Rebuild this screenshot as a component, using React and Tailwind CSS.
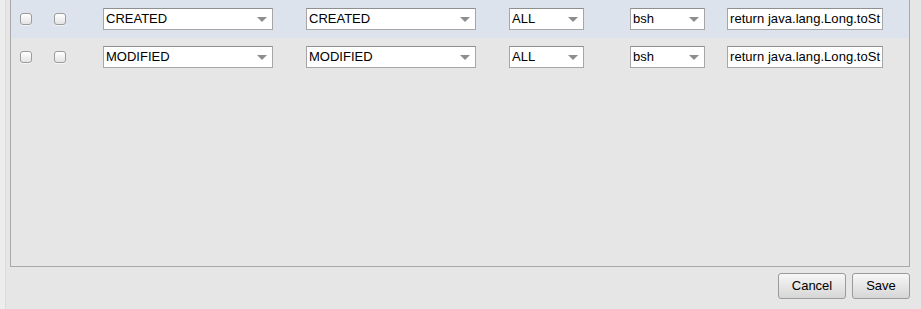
import React from 'react'

const ROWS = [
  { a: 'CREATED', b: 'CREATED', highlight: true },
  { a: 'MODIFIED', b: 'MODIFIED', highlight: false },
]

const Check = ({ className = '' }) => (
  <span
    className={`block w-[12px] h-[12px] rounded-[3px] border border-[#9c9c9c] bg-gradient-to-b from-white to-[#e4e4e4] shadow-[0_1px_0_rgba(255,255,255,0.6)] ${className}`}
  />
)

const Select = ({ value, width, className = '' }) => (
  <div
    className={`relative h-[22px] bg-white border border-[#a6a6a6] border-t-[#8f8f8f] flex items-center pl-[2px] pb-[2px] text-[13px] text-black leading-none ${width} ${className}`}
  >
    <span>{value}</span>
    <span className="absolute right-[5px] top-[8px] w-0 h-0 border-l-[5px] border-r-[5px] border-t-[5px] border-l-transparent border-r-transparent border-t-[#8e8e8e]" />
  </div>
)

export default function App() {
  return (
    <div
      className="w-[921px] h-[309px] bg-[#e6e6e6] flex overflow-hidden"
      style={{ fontFamily: '"Liberation Sans", Arial, sans-serif' }}
    >
      <div className="w-[6px] h-full bg-[#ededed] border-r border-[#dcdcdc]" />
      <div className="flex-1 flex flex-col pl-[4px] pr-[11px]">
        <div className="h-[267px] border-x border-b border-[#a9a9a9] flex flex-col">
          {ROWS.map((r, i) => (
            <div
              key={i}
              className={`h-[38px] flex items-center ${r.highlight ? 'bg-[#dce3ec]' : ''}`}
            >
              <Check className="ml-[9px]" />
              <Check className="ml-[22px]" />
              <Select value={r.a} width="w-[170px]" className="ml-[37px]" />
              <Select value={r.b} width="w-[170px]" className="ml-[33px]" />
              <Select value="ALL" width="w-[75px]" className="ml-[33px]" />
              <Select value="bsh" width="w-[75px]" className="ml-[46px]" />
              <div className="ml-[22px] w-[156px] h-[22px] bg-white border border-[#a6a6a6] border-t-[#8f8f8f] flex items-center pl-[2px] pb-[2px] overflow-hidden whitespace-nowrap text-[13px] text-black leading-none">
                <span className="tracking-[0.05px]">return java.lang.Long.toSt</span>
              </div>
            </div>
          ))}
        </div>
        <div className="flex justify-end gap-[6px] mt-[6px]">
          <button className="w-[68px] h-[26px] rounded-[3px] border border-[#9b9b9b] bg-gradient-to-b from-[#f7f7f7] to-[#d6d6d6] text-[13px] text-black">
            Cancel
          </button>
          <button className="w-[58px] h-[26px] rounded-[3px] border border-[#9b9b9b] bg-gradient-to-b from-[#f7f7f7] to-[#d6d6d6] text-[13px] text-black">
            Save
          </button>
        </div>
      </div>
    </div>
  )
}
